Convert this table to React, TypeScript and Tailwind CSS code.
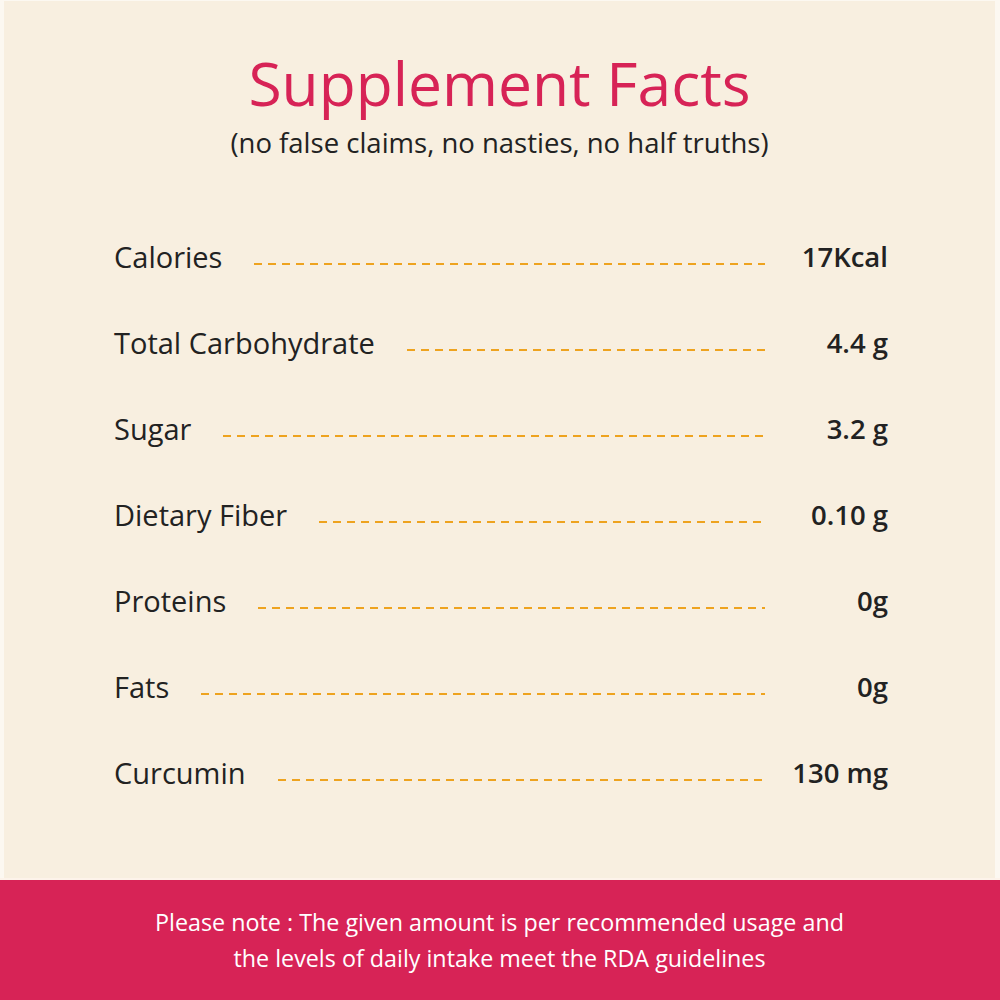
import React from 'react';

const rows = [
    { label: 'Calories', value: '17Kcal' },
    { label: 'Total Carbohydrate', value: '4.4 g' },
    { label: 'Sugar', value: '3.2 g' },
    { label: 'Dietary Fiber', value: '0.10 g' },
    { label: 'Proteins', value: '0g' },
    { label: 'Fats', value: '0g' },
    { label: 'Curcumin', value: '130 mg' },
];

const App = () => {
    return (
        <div className="w-[1000px] h-[1000px] flex flex-col bg-[#f8efe0] font-['Open_Sans',sans-serif] border-l-[4px] border-r-[5px] border-t border-[#fcf8f1]">
            {/* heading */}
            <div className="flex flex-col items-center pt-[46px]">
                <h1 className="text-[60.5px] leading-[72px] text-[#d72356]">Supplement Facts</h1>
                <p className="mt-[7px] text-[27.5px] leading-[34px] text-[#222]">
                    (no false claims, no nasties, no half truths)
                </p>
            </div>

            {/* facts list */}
            <div className="flex flex-col pl-[110px] pr-[107px] mt-[77px] gap-[46px]">
                {rows.map((r) => (
                    <div key={r.label} className="flex items-center h-[40px] text-[29px] text-[#222]">
                        <span className="whitespace-nowrap">{r.label}</span>
                        <div className="flex-1 ml-[32px] mt-[14px] h-[2px] bg-[repeating-linear-gradient(90deg,#eea31f_0_8px,transparent_8px_14px)]" />
                        <span className="w-[123px] text-right font-semibold text-[27.5px] whitespace-nowrap">{r.value}</span>
                    </div>
                ))}
            </div>

            {/* footer note */}
            <div className="mt-auto h-[122px] border-t-2 border-[#fdf3ea] bg-[#d72356] flex flex-col items-center justify-center text-white text-[23.3px] leading-[36px] -mx-[5px]">
                <p>Please note : The given amount is per recommended usage and</p>
                <p>the levels of daily intake meet the RDA guidelines</p>
            </div>
        </div>
    );
};

export default App;
